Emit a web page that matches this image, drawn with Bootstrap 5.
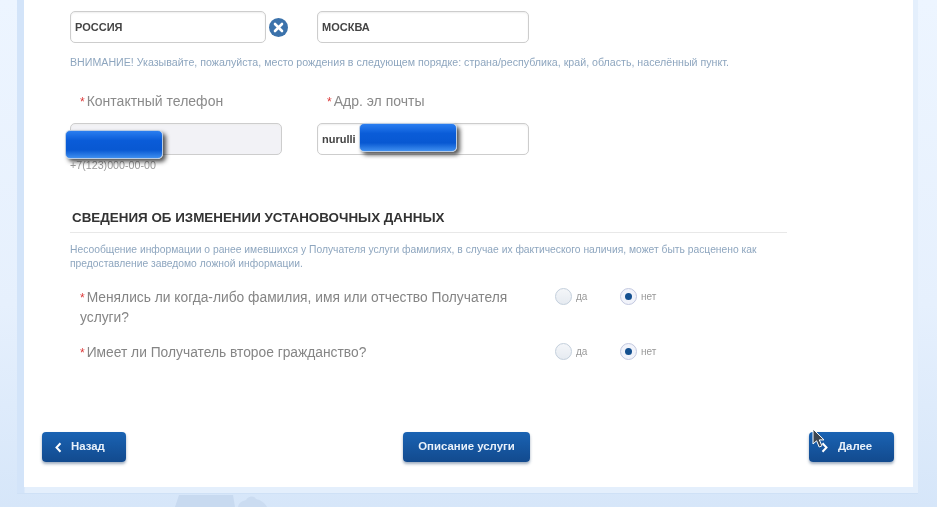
<!DOCTYPE html>
<html lang="ru">
<head>
<meta charset="utf-8">
<title>Сведения</title>
<link href="https://cdn.jsdelivr.net/npm/bootstrap@5.3.0/dist/css/bootstrap.min.css" rel="stylesheet">
<style>
html,body{height:507px;overflow:hidden}
body{position:relative;background:linear-gradient(#edf5ff,#e6f0fd 60%,#d6e6f9);font-family:"Liberation Sans",Arial,sans-serif;color:#777}
.band{margin:0 19px 0 17px;height:494px;padding:0 5px 7px 7px;background:linear-gradient(90deg,#d3e4f9 0,#d3e4f9 7px,#e4effc 8px);border-bottom:1px solid #cfe1f6}
.sheet{position:relative;height:487px;background:#fff;padding:11px 42px 0 46px;filter:blur(.45px)}
.fld{height:32px;border:1px solid #cdcdcd;border-radius:5px;background:#fff;font-size:11px;font-weight:700;color:#444;padding:0 4px;display:flex;align-items:center;box-shadow:inset 0 1px 2px #eee}
.fld-a{width:196px}.fld-b{width:212px}.fld-gray{background:#f2f2f6}
.clr{width:19px;height:19px;margin:0 29px 0 3px;flex:none}
.gap-fld{width:35px;flex:none}
.note{font-size:10.65px;line-height:14px;color:#8ea6bf;margin:0}
.note-b{font-size:10.3px;width:717px}
.lbl{font-size:14px;line-height:17px;color:#8a8a8a;padding-left:10px}
.lbl-w{width:247px}
.lbl i{font-style:normal;color:#dc3a3a;font-size:12px;margin-right:2px}
.row-lbl{margin-top:24px}
.hint{font-size:10.7px;line-height:12px;color:#999;margin-top:4px}
.sec{font-size:13.4px;font-weight:700;line-height:15px;color:#333;padding:0 0 7px 2px;border-bottom:1px solid #e8e8e8;width:717px;margin:39px 0 10px}
.q{display:flex;width:717px}
.q-t{width:485px;padding-left:10px;font-size:13.8px;line-height:19px;color:#858585;flex:none}
.q-t i{font-style:normal;color:#dc3a3a;font-size:12px;margin-right:2px}
.q-1{margin-top:17px}
.opt{display:flex;align-items:flex-start;font-size:10px;line-height:17px;color:#999;width:65px;flex:none}
.rd{width:17px;height:17px;border-radius:50%;border:1px solid #c3cfdc;background:linear-gradient(#f4f6f9,#e6ebf1);margin-right:4px;flex:none;display:flex;align-items:center;justify-content:center}
.rd-on{background:#f1f3fa;border-color:#c3c9e0}
.rd-on::after{content:"";width:7px;height:7px;border-radius:50%;background:#14508f}
.acts{position:absolute;left:18px;right:19px;top:432px;display:flex;justify-content:space-between}
.bt{height:30px;border:0;border-radius:4px;background:linear-gradient(#1a63b3,#124a8e);color:#e9f1fa;font-size:11.4px;font-weight:700;box-shadow:0 2px 3px rgba(40,70,110,.45);display:flex;align-items:center;gap:9px;padding:0 0 0 13px}
.bt svg{width:7px;height:11px}
.bt-a{width:84px}.bt-b{width:127px;justify-content:center;padding:0;margin-right:2px}.bt-c{width:85px;padding-left:12px;gap:10px}
.blob{position:absolute;width:98px;height:29px;border-radius:5px;border:1px solid #b9cce4;background:linear-gradient(#2a7ef0,#0a5cd8 35%,#0858d2 70%,#3f8ff0);box-shadow:3px 3px 4px rgba(30,30,30,.75)}
.blob-a{left:41px;top:130px}
.blob-b{left:335px;top:123px}
.cur{position:absolute;left:788px;top:428px;width:14px;height:21px}
.deco{position:absolute;left:172px;top:495px;width:100px;height:12px}
</style>
</head>
<body>
<div class="band">
<main class="sheet">
  <div class="d-flex align-items-center">
    <div class="fld fld-a">РОССИЯ</div>
    <svg class="clr" viewBox="0 0 19 19"><circle cx="9.5" cy="9.5" r="9.5" fill="#3b72ab"/><path d="M6 6l7 7M13 6l-7 7" stroke="#fff" stroke-width="2.6" stroke-linecap="round"/></svg>
    <div class="fld fld-b">МОСКВА</div>
  </div>
  <p class="note mt-2 pt-1">ВНИМАНИЕ! Указывайте, пожалуйста, место рождения в следующем порядке: страна/республика, край, область, населённый пункт.</p>
  <div class="d-flex row-lbl">
    <div class="lbl lbl-w"><i>*</i>Контактный телефон</div>
    <div class="lbl"><i>*</i>Адр. эл почты</div>
  </div>
  <div class="d-flex mt-2 pt-1">
    <div class="fld fld-b fld-gray"></div>
    <div class="gap-fld"></div>
    <div class="fld fld-b">nurulli</div>
  </div>
  <div class="hint">+7(123)000-00-00</div>
  <h2 class="sec">СВЕДЕНИЯ ОБ ИЗМЕНЕНИИ УСТАНОВОЧНЫХ ДАННЫХ</h2>
  <p class="note note-b">Несообщение информации о ранее имевшихся у Получателя услуги фамилиях, в случае их фактического наличия, может быть расценено как предоставление заведомо ложной информации.</p>
  <div class="q q-1">
    <div class="q-t"><span class="d-block"><i>*</i>Менялись ли когда-либо фамилия, имя или отчество Получателя</span><span class="d-block">услуги?</span></div>
    <div class="opt"><span class="rd"></span>да</div>
    <div class="opt"><span class="rd rd-on"></span>нет</div>
  </div>
  <div class="q mt-3">
    <div class="q-t"><i>*</i>Имеет ли Получатель второе гражданство?</div>
    <div class="opt"><span class="rd"></span>да</div>
    <div class="opt"><span class="rd rd-on"></span>нет</div>
  </div>
  <div class="blob blob-a"></div>
  <div class="blob blob-b"></div>
  <div class="acts">
    <button class="bt bt-a"><svg viewBox="0 0 7 11"><path d="M5.5 1.2L1.5 5.5l4 4.3" fill="none" stroke="#fff" stroke-width="2"/></svg>Назад</button>
    <button class="bt bt-b">Описание услуги</button>
    <button class="bt bt-c"><svg viewBox="0 0 7 11"><path d="M1.5 1.2l4 4.3-4 4.3" fill="none" stroke="#fff" stroke-width="2"/></svg>Далее</button>
  </div>
  <svg class="cur" viewBox="0 0 14 21"><path d="M1 1v15l3.6-3.2 2.6 6.2 2.7-1.2-2.6-5.9H12z" fill="#3e4650" stroke="#fff" stroke-width="1"/></svg>
</main>
</div>
<svg class="deco" viewBox="0 0 100 12"><path d="M3 12L7 0h54l2 12z" fill="#c8daf0"/><path d="M66 12c1-5 5-6 8-7 2-4 8-5 10-1 5 1 9 4 11 8z" fill="#cbdcf1"/></svg>
</body>
</html>
